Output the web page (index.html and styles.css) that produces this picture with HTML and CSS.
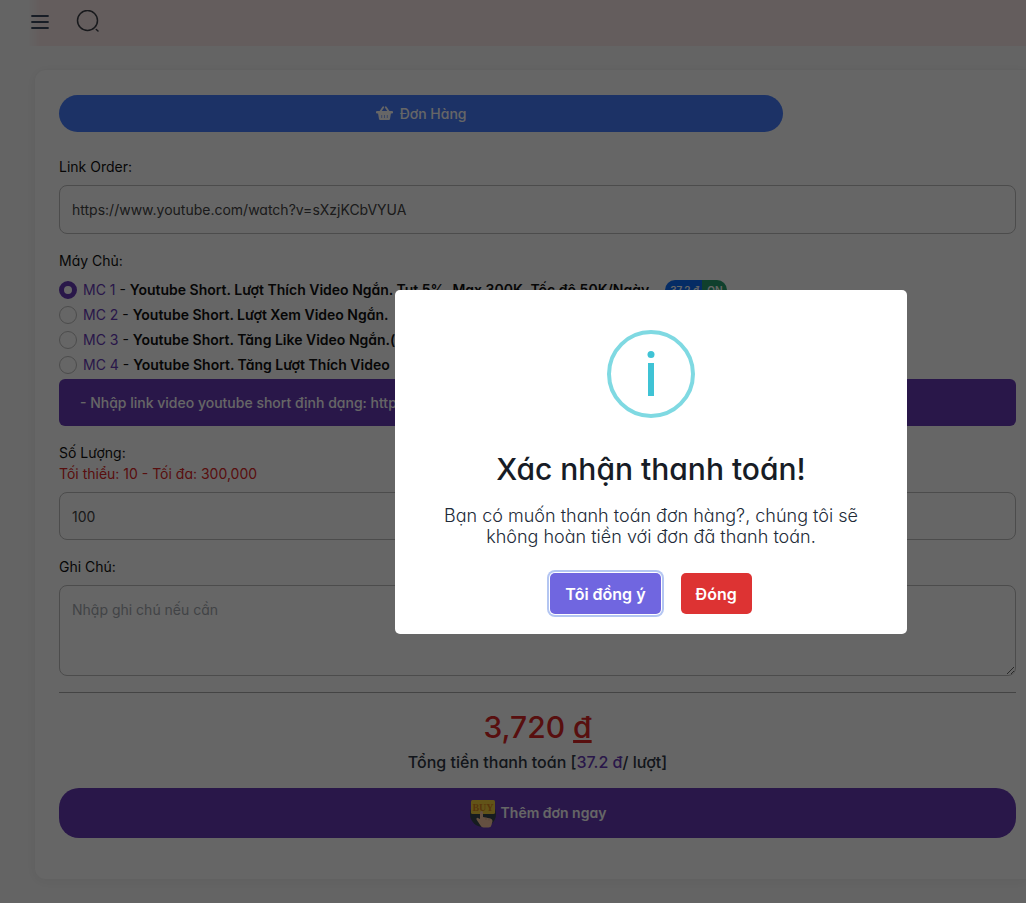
FILE: index.html
```html
<!DOCTYPE html>
<html lang="vi">
<head>
<meta charset="utf-8">
<meta name="viewport" content="width=device-width, initial-scale=1">
<title>Đơn Hàng</title>
<link rel="stylesheet" href="styles.css">
</head>
<body>
<header class="topbar">
  <button class="icon-btn" type="button" aria-label="Menu">
    <svg width="20" height="20" viewBox="0 0 20 20" fill="none" stroke="#3c4a60" stroke-width="1.8" stroke-linecap="round"><path d="M2 4h16M2 10h16M2 16h16"/></svg>
  </button>
  <button class="icon-btn" type="button" aria-label="Search">
    <svg width="24" height="24" viewBox="0 0 24 24" fill="none" stroke="#3c4048" stroke-width="1.5" stroke-linecap="round"><circle cx="11.5" cy="10.5" r="10"/><path d="M20.300 19.500l1.700 1.500"/></svg>
  </button>
</header>
<main class="page">
  <form class="card">
    <div class="tabs">
      <button class="tab" type="button">
        <svg width="17" height="15" viewBox="0 0 17 15"><path d="M4.2 5.8 7.2 1.2M12.8 5.8 9.8 1.2" stroke="currentColor" stroke-width="1.8" stroke-linecap="round"/><path fill="currentColor" d="M1 5h15a.8.8 0 0 1 0 2.400H1A.8.8 0 0 1 1 5zM2 7h13l-1 6a1.200 1.200 0 0 1-1.200 1H4.200A1.200 1.200 0 0 1 3 13z"/><path d="M5.700 9v3M8.500 9v3M11.300 9v3" stroke="#467dff" stroke-opacity=".6" stroke-width="1"/></svg>
        Đơn Hàng
      </button>
    </div>
    <div class="field">
      <label for="link">Link Order:</label>
      <input class="control" id="link" type="text" value="https://www.youtube.com/watch?v=sXzjKCbVYUA">
    </div>
    <fieldset class="servers">
      <legend>Máy Chủ:</legend>
      <label class="server"><input type="radio" name="server" checked><span><span class="accent">MC 1</span> - <b>Youtube Short. Lượt Thích Video Ngắn. Tụt 5%. Max 300K. Tốc độ 50K/Ngày</b></span><span class="badge"><span class="price">37.2 đ</span><span class="state">ON</span></span></label>
      <label class="server"><input type="radio" name="server"><span><span class="accent">MC 2</span> - <b>Youtube Short. Lượt Xem Video Ngắn.</b></span></label>
      <label class="server"><input type="radio" name="server"><span><span class="accent">MC 3</span> - <b>Youtube Short. Tăng Like Video Ngắn.(</b></span></label>
      <label class="server"><input type="radio" name="server"><span><span class="accent">MC 4</span> - <b>Youtube Short. Tăng Lượt Thích Video</b></span></label>
    </fieldset>
    <p class="notice">- Nhập link video youtube short định dạng: https:</p>
    <div class="field quantity">
      <label for="qty">Số Lượng:<span class="limit">Tối thiểu: 10 - Tối đa: 300,000</span></label>
      <input class="control" id="qty" type="text" value="100">
    </div>
    <div class="field">
      <label for="note">Ghi Chú:</label>
      <textarea class="control note" id="note" placeholder="Nhập ghi chú nếu cần"></textarea>
    </div>
    <div class="total">
      <div class="amount">3,720 <u>đ</u></div>
      <div class="summary">Tổng tiền thanh toán [<span class="accent">37.2 đ</span>/ lượt]</div>
    </div>
    <button class="submit" type="button">
      <svg width="28" height="30" viewBox="0 0 28 30"><circle cx="14" cy="16" r="13" fill="#37474f"/><rect x="2" y="2" width="24" height="14" rx="1.500" fill="#f5cf3d"/><text x="14" y="13" text-anchor="middle" font-family="Liberation Serif, serif" font-size="10" font-weight="700" fill="#d98520">BUY</text><path fill="#fcc9a4" d="M11 14.500q0-1.500 1.500-1.500t1.500 1.500V19l7.500 1.500q2 .5 2 2.500l-1 4q-.5 2.500-3 2.500h-5q-2 0-3-2l-4-6q-.5-1.500 1-1.700L11 21z"/><path d="M17 19.500v2.500M20 20.200v2.300" stroke="#e09f7c" stroke-width=".7"/></svg>
      Thêm đơn ngay
    </button>
  </form>
</main>
<div class="backdrop">
  <section class="dialog" role="dialog" aria-modal="true" aria-labelledby="dialog-title">
    <svg class="info" width="88" height="88" viewBox="0 0 88 88"><circle cx="44" cy="44" r="42" fill="none" stroke="#7fd9e2" stroke-width="4"/><circle cx="44" cy="24.500" r="3.500" fill="#3fc3d5"/><path fill="#3fc3d5" d="M41 33h6v33h-6z"/></svg>
    <h2 id="dialog-title">Xác nhận thanh toán!</h2>
    <p>Bạn có muốn thanh toán đơn hàng?, chúng tôi sẽ không hoàn tiền với đơn đã thanh toán.</p>
    <div class="actions">
      <button class="btn confirm" type="button">Tôi đồng ý</button>
      <button class="btn cancel" type="button">Đóng</button>
    </div>
  </section>
</div>
</body>
</html>
```
FILE: styles.css
```css
* { box-sizing: border-box; }
body {
  margin: 0;
  min-height: 100vh;
  background: #fafafa;
  color: #111;
  font: 400 14px/20px Inter, "Noto Sans", sans-serif;
  font-feature-settings: "cv11";
  overflow: hidden;
}
button, input, textarea { font: inherit; font-feature-settings: inherit; color: inherit; }
button { border: 0; cursor: pointer; }
.topbar {
  display: flex;
  align-items: center;
  gap: 22px;
  height: 46px;
  padding: 0 28px 2px;
  background: linear-gradient(90deg, #fafafa 28px, #fae8e8 40px);
}
.icon-btn { display: flex; padding: 2px; background: none; }
.page { padding: 23px 0 24px 34px; }
.card {
  border: 1px solid #f3f3f3;
  border-right: 0;
  border-radius: 12px 0 0 12px;
  padding: 25px 10px 41px 24px;
  background: #fff;
  box-shadow: 0 2px 12px rgba(0, 0, 0, .05);
}
.tabs { display: grid; grid-template-columns: 28fr 9fr; margin-bottom: 25px; }
.tab {
  display: flex;
  align-items: center;
  justify-content: center;
  gap: 7px;
  height: 37px;
  border-radius: 20px;
  background: #467dff;
  color: #fff;
  font-weight: 500;
}
.field { display: flex; flex-direction: column; gap: 8px; margin-bottom: 17px; }
.control {
  width: 100%;
  height: 49px;
  padding: 12px;
  border: 1px solid #bdbdbd;
  border-radius: 8px;
  background: #fff;
  color: #444;
}
.quantity .control { height: 48px; }
.note { display: block; height: 91px; padding: 14px 12px; resize: vertical; }
.note::placeholder { color: #a4a8ae; }
.limit { display: block; margin-top: 1px; color: #dc2626; }
.servers { margin: 0; padding: 0; border: 0; }
.servers legend { padding: 0; margin-bottom: 6px; }
.server { display: flex; align-items: center; gap: 6px; height: 25px; white-space: nowrap; }
.server input {
  appearance: none;
  width: 18px;
  height: 18px;
  margin: 0;
  border: 1px solid #bdbdbd;
  border-radius: 50%;
}
.server input:checked { border: 5px solid #673ab7; }
.server b { font-weight: 600; }
.accent { color: #673ab7; }
.badge {
  display: flex;
  margin-left: 10px;
  border-radius: 10px;
  overflow: hidden;
  color: #fff;
  font-size: 10px;
  font-weight: 600;
}
.price { padding: 0 3px 0 5px; background: #0d6efd; }
.state { padding: 0 5px; background: #28a070; }
.notice {
  margin: 2px 0 17px;
  padding: 14px 21px 13px;
  border-radius: 6px;
  background: #673ab7;
  color: #fff;
  font-weight: 500;
}
.total {
  padding: 14px 0 15px;
  margin-top: -1px;
  border-top: 1px solid #aaa;
  text-align: center;
}
.amount { font-size: 30px; line-height: 40px; font-weight: 500; color: #dc2626; }
.summary { margin-top: 4px; font-size: 16px; line-height: 22px; font-weight: 500; color: #2f3744; }
.submit {
  display: flex;
  align-items: center;
  justify-content: center;
  gap: 4px;
  width: 100%;
  height: 50px;
  padding-bottom: 2px;
  border-radius: 20px;
  background: #673ab7;
  color: #fff;
  font-weight: 600;
}
.backdrop {
  position: fixed;
  inset: 0;
  display: flex;
  align-items: center;
  justify-content: center;
  padding: 21px 0 0 276px;
  background: rgba(0, 0, 0, .6);
}
.dialog {
  display: flex;
  flex-direction: column;
  align-items: center;
  width: 512px;
  max-width: 100%;
  padding: 40px 28px 20px;
  border-radius: 5px;
  background: #fff;
  text-align: center;
}
.dialog h2 { margin: 32px 0 17px; font-size: 30px; line-height: 38px; font-weight: 500; color: #171c26; }
.dialog p { margin: 0; font-size: 18px; line-height: 21px; font-weight: 300; color: #222b38; }
.actions { display: flex; gap: 20px; margin-top: 26px; }
.btn { height: 41px; padding: 0 15px; border-radius: 5px; color: #fff; font-size: 16px; font-weight: 600; }
.confirm { background: #7066e0; box-shadow: 0 0 0 1px #fff, 0 0 0 3px #b4c6f2; }
.cancel { background: #dd3333; }
```
